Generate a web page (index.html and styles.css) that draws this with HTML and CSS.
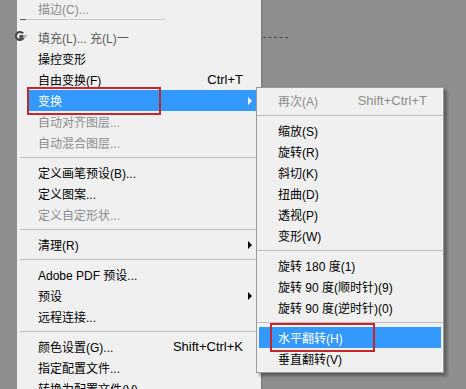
FILE: index.html
```html
<!DOCTYPE html>
<html lang="zh-CN">
<head>
<meta charset="utf-8">
<title>编辑菜单 - 变换</title>
<link rel="stylesheet" href="styles.css">
</head>
<body>
<div class="stage">
  <div class="menu main">
    <div class="item dis"><span class="label">描边(C)...</span></div>
    <div class="ghost-sep"></div>
    <div class="item ghost"><span class="label">填充(L)... 充(L)一</span></div>
    <div class="item"><span class="label">操控变形</span></div>
    <div class="item"><span class="label">自由变换(F)</span><span class="key">Ctrl+T</span></div>
    <div class="item active"><span class="label">变换</span><span class="arrow"></span></div>
    <div class="item dis"><span class="label">自动对齐图层...</span></div>
    <div class="item dis"><span class="label">自动混合图层...</span></div>
    <div class="sep"></div>
    <div class="item"><span class="label">定义画笔预设(B)...</span></div>
    <div class="item"><span class="label">定义图案...</span></div>
    <div class="item dis"><span class="label">定义自定形状...</span></div>
    <div class="sep"></div>
    <div class="item"><span class="label">清理(R)</span><span class="arrow"></span></div>
    <div class="sep"></div>
    <div class="item"><span class="label">Adobe PDF 预设...</span></div>
    <div class="item"><span class="label">预设</span><span class="arrow"></span></div>
    <div class="item"><span class="label">远程连接...</span></div>
    <div class="sep"></div>
    <div class="item"><span class="label">颜色设置(G)...</span><span class="key">Shift+Ctrl+K</span></div>
    <div class="item"><span class="label">指定配置文件...</span></div>
    <div class="item"><span class="label">转换为配置文件(V)...</span></div>
  </div>

  <div class="menu sub">
    <div class="item dis"><span class="label">再次(A)</span><span class="key">Shift+Ctrl+T</span></div>
    <div class="sep"></div>
    <div class="item"><span class="label">缩放(S)</span></div>
    <div class="item"><span class="label">旋转(R)</span></div>
    <div class="item"><span class="label">斜切(K)</span></div>
    <div class="item"><span class="label">扭曲(D)</span></div>
    <div class="item"><span class="label">透视(P)</span></div>
    <div class="item"><span class="label">变形(W)</span></div>
    <div class="sep"></div>
    <div class="item"><span class="label">旋转 180 度(1)</span></div>
    <div class="item"><span class="label">旋转 90 度(顺时针)(9)</span></div>
    <div class="item"><span class="label">旋转 90 度(逆时针)(0)</span></div>
    <div class="sep"></div>
    <div class="item active"><span class="label">水平翻转(H)</span></div>
    <div class="item"><span class="label">垂直翻转(V)</span></div>
  </div>

  <div class="mark mark-main"></div>
  <div class="mark mark-sub"></div>
  <div class="dashes"></div>
  <svg class="blob" width="14" height="12" viewBox="0 0 14 12">
    <path d="M9 3.5 A4 4 0 1 0 9 8.5 L6.5 8 L6.5 6 L9.5 6" fill="none" stroke="#4a4a4a" stroke-width="2.2"/>
    <path d="M10 6 L13 6" stroke="#777" stroke-width="1"/>
  </svg>
</div>
</body>
</html>
```
FILE: styles.css
```css
html, body {
  margin: 0;
  padding: 0;
}
body {
  background: #8e8e8e;
  width: 466px;
  height: 389px;
  overflow: hidden;
  font-family: "Liberation Sans", "Noto Sans CJK SC", sans-serif;
  font-size: 12px;
  color: #000;
}
.stage {
  position: relative;
  width: 466px;
  height: 389px;
  overflow: hidden;
}
.menu {
  background: #f0f0f0;
}
.main {
  margin-top: -2px;
  margin-left: 17px;
  width: 244px;
  box-shadow: 1px 0 1px rgba(0,0,0,0.15);
}
.item {
  display: flex;
  align-items: center;
  height: 21px;
  padding-left: 21px;
  padding-right: 9px;
  white-space: nowrap;
}
.label {
  flex: 1;
}
.key {
  font-size: 13px;
  padding-right: 9px;
}
.arrow {
  width: 0;
  height: 0;
  border-left: 4px solid #000;
  border-top: 4px solid transparent;
  border-bottom: 4px solid transparent;
}
.dis {
  color: #8d8d8d;
}
.ghost {
  color: #5a5a5a;
}
.ghost-sep {
  height: 8px;
  margin-left: 3px;
  background-image: linear-gradient(to right, #555 0, #555 6px, #c9c9c9 6px, #c9c9c9 145px, transparent 145px);
  background-size: 100% 1px;
  background-repeat: no-repeat;
  background-position: 0 0;
}
.sep {
  height: 1px;
  margin: 4px 0 4px 3px;
  background: #bdbdbd;
}
.main .active {
  margin-left: 11px;
  margin-right: 3px;
  padding-left: 10px;
  padding-right: 6px;
  background: #3399ff;
  color: #fff;
}
.main .active .arrow {
  border-left-color: #fff;
}
.sub {
  position: absolute;
  left: 256px;
  top: 87px;
  width: 186px;
  border: 1px solid #9a9a9a;
  padding: 2px 0 3px;
  box-shadow: 3px 3px 3px rgba(0,0,0,0.35);
}
.sub .item {
  padding-left: 21px;
  padding-right: 7px;
}
.sub .sep {
  margin-left: 0;
}
.sub .active {
  margin: 0 2px;
  padding-left: 19px;
  background: #3399ff;
  color: #fff;
}
.mark {
  position: absolute;
  border: 2px solid #c3262c;
  box-sizing: border-box;
}
.mark-main {
  left: 27px;
  top: 87px;
  width: 134px;
  height: 28px;
}
.mark-sub {
  left: 270px;
  top: 323px;
  width: 105px;
  height: 29px;
}
.dashes {
  position: absolute;
  left: 263px;
  top: 37px;
  width: 25px;
  border-top: 1px dashed #4a4a4a;
}
.blob {
  position: absolute;
  left: 14px;
  top: 30px;
}
```
